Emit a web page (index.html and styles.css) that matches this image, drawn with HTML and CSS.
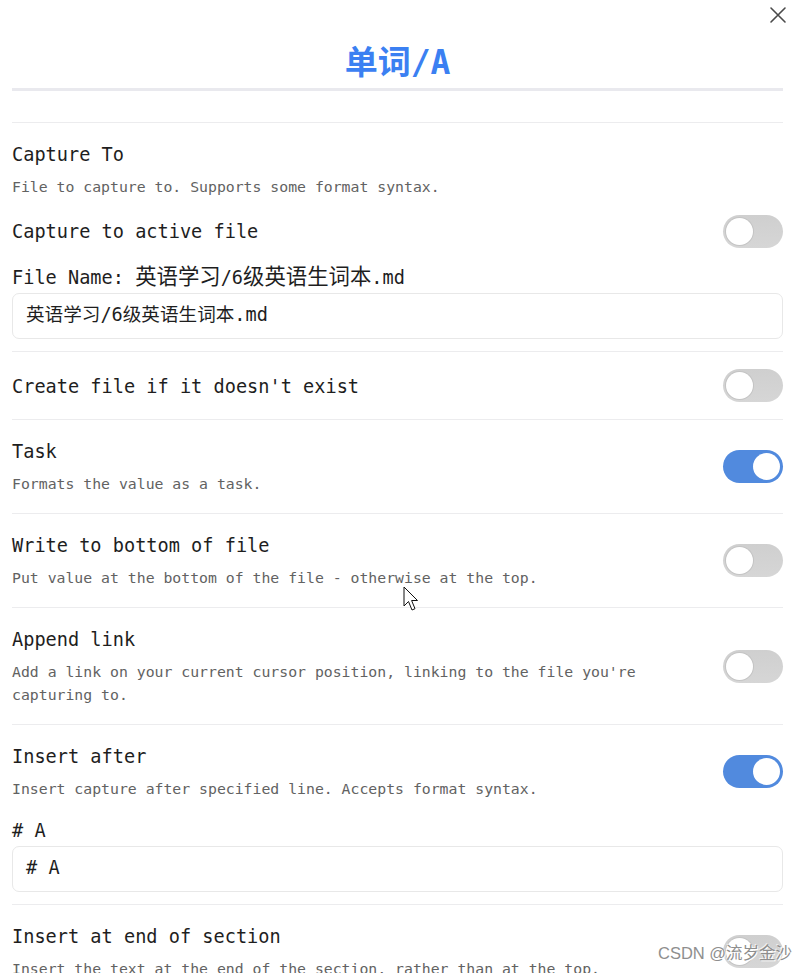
FILE: index.html
```html
<!DOCTYPE html>
<html lang="zh">
<head>
<meta charset="utf-8">
<title>单词/A</title>
<link rel="stylesheet" href="styles.css">
</head>
<body>
<div class="modal">
  <button class="close" aria-label="Close">
    <svg width="18" height="18" viewBox="0 0 18 18"><path d="M2 2 L16 16 M16 2 L2 16" stroke="#4a4a4a" stroke-width="1.6" fill="none" stroke-linecap="round"/></svg>
  </button>
  <header class="head">
    <h1 class="title">单词/A</h1>
  </header>

  <section class="group with-field">
    <div class="row">
      <div class="info">
        <div class="name">Capture To</div>
        <div class="desc">File to capture to. Supports some format syntax.</div>
      </div>
    </div>
    <div class="row row-sub">
      <div class="info info-plain">
        <div class="name">Capture to active file</div>
      </div>
      <div class="toggle"></div>
    </div>
    <div class="label">File Name: <span class="cjk">英语学习</span>/6<span class="cjk">级英语生词本</span>.md</div>
    <div class="field">英语学习/6级英语生词本.md</div>
  </section>

  <section class="group">
    <div class="row">
      <div class="info"><div class="name">Create file if it doesn't exist</div></div>
      <div class="toggle"></div>
    </div>
  </section>

  <section class="group">
    <div class="row">
      <div class="info">
        <div class="name">Task</div>
        <div class="desc">Formats the value as a task.</div>
      </div>
      <div class="toggle on"></div>
    </div>
  </section>

  <section class="group">
    <div class="row">
      <div class="info">
        <div class="name">Write to bottom of file</div>
        <div class="desc">Put value at the bottom of the file - otherwise at the top.</div>
      </div>
      <div class="toggle"></div>
    </div>
  </section>

  <section class="group">
    <div class="row">
      <div class="info">
        <div class="name">Append link</div>
        <div class="desc">Add a link on your current cursor position, linking to the file you're capturing to.</div>
      </div>
      <div class="toggle"></div>
    </div>
  </section>

  <section class="group with-field">
    <div class="row">
      <div class="info">
        <div class="name">Insert after</div>
        <div class="desc">Insert capture after specified line. Accepts format syntax.</div>
      </div>
      <div class="toggle on"></div>
    </div>
    <div class="label">#&nbsp;A</div>
    <div class="field">#&nbsp;A</div>
  </section>

  <section class="group">
    <div class="row">
      <div class="info">
        <div class="name">Insert at end of section</div>
        <div class="desc">Insert the text at the end of the section, rather than at the top.</div>
      </div>
      <div class="toggle"></div>
    </div>
  </section>
</div>

<svg class="cursor" width="18" height="28" viewBox="0 0 18 28"><path d="M1 1 L1 20 L5.5 15.5 L9 24 L12 22.7 L8.6 14.5 L14.5 14.5 Z" fill="#fff" stroke="#111" stroke-width="1"/></svg>
<div class="watermark">CSDN @流岁金沙</div>
</body>
</html>
```

FILE: styles.css
```css
html, body {
  margin: 0;
  padding: 0;
  overflow: hidden;
  background: #ffffff;
}

body {
  font-family: "DejaVu Sans Mono", "Noto Sans CJK SC", monospace;
  color: #1e1e1e;
}

.modal {
  position: relative;
  width: 771px;
  padding: 0 26px 0 12px;
}

.close {
  position: absolute;
  top: 6px;
  right: 22px;
  width: 18px;
  height: 18px;
  padding: 0;
  border: 0;
  background: none;
  display: flex;
}

.head {
  padding-top: 42px;
  border-bottom: 3px solid #e9e9ee;
  margin-bottom: 31px;
}

.title {
  margin: 0;
  height: 46px;
  font-family: "DejaVu Sans Mono", "Noto Sans CJK SC", sans-serif;
  font-size: 33px;
  line-height: 42px;
  font-weight: 700;
  color: #3b80f2;
  text-align: center;
}

.group {
  border-top: 1px solid #ececee;
  padding: 17px 0;
}

.group.with-field {
  padding-bottom: 12px;
}

.row {
  display: flex;
  align-items: center;
}

.row-sub {
  margin-top: 16px;
}

.info {
  flex: 1;
  padding: 3px 0 1px;
  min-width: 0;
}

.info-plain {
  padding: 0;
}

.name {
  font-size: 18.6px;
  line-height: 24px;
  color: #1e1e1e;
}

.desc {
  margin-top: 8px;
  font-size: 14.8px;
  line-height: 23px;
  color: #626262;
}

.toggle {
  position: relative;
  flex: none;
  width: 60px;
  height: 33px;
  margin-left: 16px;
  border-radius: 17px;
  background: linear-gradient(#cfcfcf, #d6d6d6);
  box-sizing: border-box;
}

.toggle::after {
  content: "";
  position: absolute;
  top: 3px;
  left: 3px;
  width: 27px;
  height: 27px;
  border-radius: 50%;
  background: #ffffff;
  box-shadow: 0 0 0 1px #c4c4c4;
}

.toggle.on {
  background: #518ade;
}

.toggle.on::after {
  left: 30px;
  box-shadow: none;
}

.label {
  margin-top: 18px;
  height: 24px;
  font-size: 18.6px;
  line-height: 24px;
  color: #1e1e1e;
}

.cjk {
  font-size: 1.15em;
  line-height: 1;
}

.field {
  height: 44px;
  margin-top: 3px;
  padding: 0 13px;
  border: 1px solid #e8e8e8;
  border-radius: 7px;
  font-size: 18.6px;
  line-height: 42px;
  color: #1e1e1e;
}

.cursor {
  position: absolute;
  left: 403px;
  top: 586px;
}

.watermark {
  position: absolute;
  left: 658px;
  top: 942px;
  font-family: "Liberation Sans", "Noto Sans CJK SC", sans-serif;
  font-size: 16.5px;
  line-height: 22px;
  color: #8e8e8e;
  text-shadow: 1px 1px 0 #ffffff, -1px -1px 0 rgba(255,255,255,0.7);
  white-space: nowrap;
}
```
